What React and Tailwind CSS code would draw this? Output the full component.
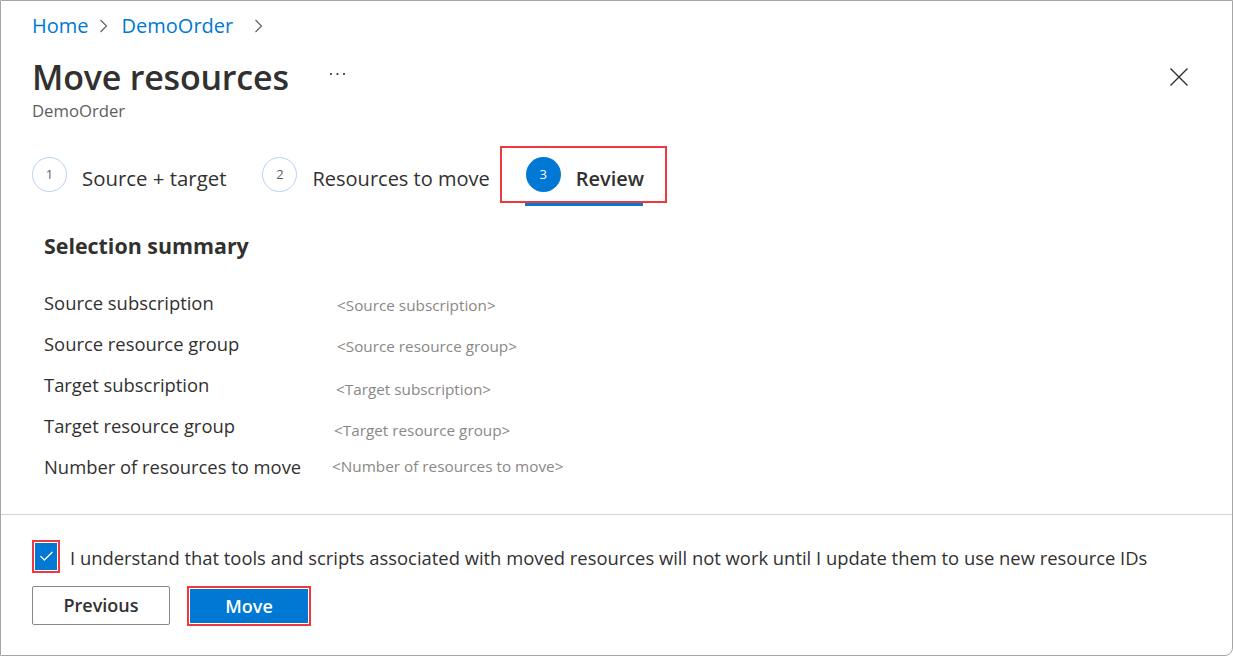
import { Check } from 'lucide-react';

const rows = [
    { label: 'Source subscription', value: '<Source subscription>', cls: 'pl-[293px] pt-[3px]' },
    { label: 'Source resource group', value: '<Source resource group>', cls: 'pl-[293px] pt-[3px]' },
    { label: 'Target subscription', value: '<Target subscription>', cls: 'pl-[292px] pt-[5px]' },
    { label: 'Target resource group', value: '<Target resource group>', cls: 'pl-[290px] pt-[5px]' },
    { label: 'Number of resources to move', value: '<Number of resources to move>', cls: 'pl-[288px] pt-0' },
];

function Chevron() {
    return (
        <svg width="9" height="14" viewBox="0 0 9 14" className="text-[#605e5c]">
            <path d="M1.5 1 L7.5 7 L1.5 13" fill="none" stroke="currentColor" strokeWidth="1.1" />
        </svg>
    );
}

function StepCircle({ n }) {
    return (
        <div className="w-[35px] h-[35px] rounded-full border border-[#b7d3f5] flex items-center justify-center text-[13px] text-[#605e5c]">
            {n}
        </div>
    );
}

export default function App() {
    return (
        <div className="w-[1233px] h-[656px] bg-white border border-[#a6a6a6] rounded-br-[8px] flex flex-col font-['Open_Sans','Noto_Sans',sans-serif] text-[#323130] overflow-hidden">
            <div className="h-[513px] px-[31px]">
                {/* breadcrumb */}
                <div className="flex items-center h-[24px] mt-[13px] text-[20px] text-[#0078d4]">
                    <span>Home</span>
                    <span className="ml-[10px] mr-[14px] flex"><Chevron /></span>
                    <span>DemoOrder</span>
                    <span className="ml-[21px] flex"><Chevron /></span>
                </div>

                {/* title row */}
                <div className="flex items-center justify-between mt-[19px] h-[40px]">
                    <div className="flex items-center">
                        <h1 className="text-[34px] font-semibold leading-[40px] tracking-[-0.2px]">Move resources</h1>
                        <svg width="17" height="4" viewBox="0 0 17 4" className="ml-[40px] mt-[-6px]">
                            <circle cx="2" cy="2" r="1.1" fill="#323130" />
                            <circle cx="8.5" cy="2" r="1.1" fill="#323130" />
                            <circle cx="15" cy="2" r="1.1" fill="#323130" />
                        </svg>
                    </div>
                    <svg width="20" height="20" viewBox="0 0 20 20" className="mr-[12px]">
                        <path d="M1.5 1.5 L18.5 18.5 M18.5 1.5 L1.5 18.5" stroke="#323130" strokeWidth="1.4" />
                    </svg>
                </div>
                <div className="text-[16.7px] leading-[22px] text-[#605e5c] mt-[3px]">DemoOrder</div>

                {/* steps */}
                <div className="flex items-start mt-[24px]">
                    <div className="flex items-center h-[57px]">
                        <StepCircle n="1" />
                        <span className="ml-[15px] text-[20.4px] pt-[8px]">Source + target</span>
                    </div>
                    <div className="flex items-center h-[57px] ml-[36px]">
                        <StepCircle n="2" />
                        <span className="ml-[15px] text-[20px] pt-[8px]">Resources to move</span>
                    </div>
                    <div className="flex flex-col ml-[10px]">
                        <div className="flex items-center h-[57px] border-2 border-[#f0393f] pl-[24px] pr-[21px]">
                            <div className="w-[35px] h-[35px] rounded-full bg-[#0078d4] flex items-center justify-center text-[13px] text-white">3</div>
                            <span className="ml-[15px] text-[20px] font-semibold pt-[8px]">Review</span>
                        </div>
                        <div className="h-[3px] w-[118px] ml-[25px] bg-[#0078d4]" />
                    </div>
                </div>

                {/* summary */}
                <div className="pl-[12px] mt-[26px]">
                    <h2 className="text-[21.4px] font-bold leading-[28px]">Selection summary</h2>
                    <div className="mt-[31px] flex flex-col">
                        {rows.map((r) => (
                            <div key={r.label} className="flex items-start h-[41px]">
                                <span className="w-0 whitespace-nowrap text-[18.4px] leading-[24px]">{r.label}</span>
                                <span className={`whitespace-nowrap text-[15.3px] leading-[22px] text-[#8a8886] ${r.cls}`}>{r.value}</span>
                            </div>
                        ))}
                    </div>
                </div>
            </div>

            {/* footer */}
            <div className="border-t border-[#d4d4d4] px-[31px] flex-1">
                <div className="flex items-center mt-[25px]">
                    <div className="w-[28px] h-[33px] border-2 border-[#f0393f] p-[1px] flex">
                        <div className="flex-1 bg-[#0078d4] flex items-center justify-center">
                            <Check size={17} strokeWidth={1.8} className="text-white" />
                        </div>
                    </div>
                    <span className="ml-[10px] text-[18.4px] whitespace-nowrap pt-[2px]">I understand that tools and scripts associated with moved resources will not work until I update them to use new resource IDs</span>
                </div>
                <div className="flex items-start mt-[13px]">
                    <button className="w-[138px] h-[39px] border border-[#8a8886] rounded-[2px] text-[18px] font-semibold text-[#323130]">Previous</button>
                    <div className="ml-[17px] border-2 border-[#f0393f] p-[1px] w-[124px] h-[40px] flex">
                        <button className="flex-1 bg-[#0078d4] text-white text-[18px] font-semibold">Move</button>
                    </div>
                </div>
            </div>
        </div>
    );
}
